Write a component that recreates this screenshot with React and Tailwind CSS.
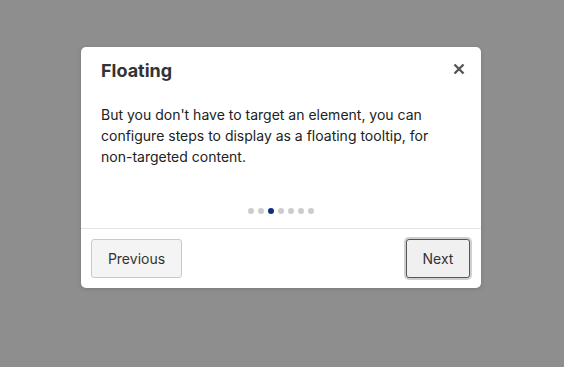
export default function App() {
  const dots = [0, 1, 2, 3, 4, 5, 6];
  return (
    <div
      className="w-[564px] h-[367px] bg-[#8e8e8e] relative"
      style={{ fontFamily: "Inter, 'Noto Sans', sans-serif" }}
    >
      <div className="absolute left-[81px] top-[47px] w-[400px] bg-white rounded-[5px] shadow-[0_1px_4px_rgba(0,0,0,0.15)] flex flex-col">
        <div className="flex items-center justify-between pl-5 pr-[16px] pt-[5px] h-[43px]">
          <h2 className="text-[18px] font-bold text-[#333] leading-[24px] m-0">Floating</h2>
          <svg width="12" height="12" viewBox="0 0 12 12" className="relative -top-[2px]">
            <path d="M1.5 1.5 L10.5 10.5 M10.5 1.5 L1.5 10.5" stroke="#555" strokeWidth="2.4" strokeLinecap="butt" />
          </svg>
        </div>
        <div className="px-5 pt-[14px] text-[14px] leading-[21px] text-[#222]">
          But you don't have to target an element, you can configure steps to display as a floating tooltip, for non-targeted content.
        </div>
        <div className="flex justify-center gap-[4px] mt-[41px] mb-[14px]">
          {dots.map((i) => (
            <span
              key={i}
              className={
                i === 2
                  ? "w-[6px] h-[6px] rounded-full bg-[#0b2f7d]"
                  : "w-[6px] h-[6px] rounded-full bg-[#cccccc]"
              }
            />
          ))}
        </div>
        <div className="border-t border-[#e3e3e3] flex justify-between items-center px-[10px] pt-[10px] pb-[10px]">
          <button className="h-[39px] w-[91px] bg-[#f4f4f4] border border-[#c9c9c9] rounded-[3px] text-[14px] text-[#333]">
            Previous
          </button>
          <button className="h-[39px] w-[64px] bg-[#f0f0f0] border border-[#555] rounded-[3px] text-[14px] text-[#333] shadow-[0_0_0_2px_#cfcfcf] mr-[1px]">
            Next
          </button>
        </div>
      </div>
    </div>
  );
}
